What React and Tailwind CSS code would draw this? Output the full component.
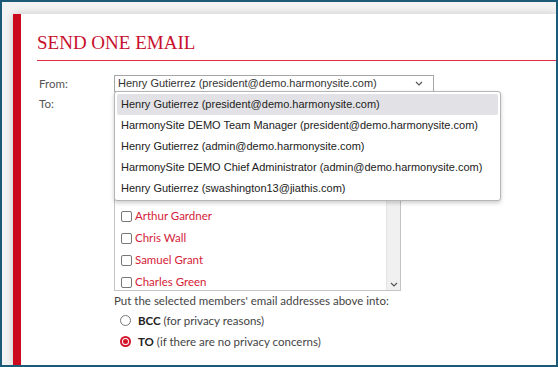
import React from "react";

// first rows sit under the open sender dropdown, so they are left blank
const members = ["", "", "", "", "", "Arthur Gardner", "Chris Wall", "Samuel Grant", "Charles Green"];

const senders = [
  "Henry Gutierrez (president@demo.harmonysite.com)",
  "HarmonySite DEMO Team Manager (president@demo.harmonysite.com)",
  "Henry Gutierrez (admin@demo.harmonysite.com)",
  "HarmonySite DEMO Chief Administrator (admin@demo.harmonysite.com)",
  "Henry Gutierrez (swashington13@jiathis.com)",
];

function Chevron({ className }) {
  return (
    <svg width="8" height="5" viewBox="0 0 8 5" className={className}>
      <path d="M1 1 L4 4 L7 1" fill="none" stroke="#555" strokeWidth="1.2" />
    </svg>
  );
}

export default function App() {
  const sans = { fontFamily: "Lato, 'Open Sans', sans-serif" };
  return (
    <div className="w-[558px] h-[367px] border-2 border-[#1b5b78] bg-[#f3f3f3] overflow-hidden pt-[12px] pl-[11px]">
      <div
        className="h-full bg-white border-l-[8px] border-[#cc0a1e] shadow-[0_0_8px_rgba(0,0,0,0.18)] pl-[16px] pt-[18px]"
        style={sans}
      >
        <h1 className="text-[19px] leading-[22px] text-[#c8102e] pb-[6px] border-b border-[#e2304a]" style={{ fontFamily: "'Liberation Serif', serif" }}>
          SEND ONE EMAIL
        </h1>

        <div className="relative mt-[14px] text-[11.5px] text-[#555]">
          <div className="flex items-center h-[17px]">
            <span className="w-[77px] pl-[2px]">From:</span>
            <div className="w-[320px] h-[17px] border border-[#a6a6a6] flex items-center justify-between pl-[3px] pr-[10px] text-[#333] text-[11px] whitespace-nowrap" style={{ fontFamily: "'Liberation Sans', Arial, sans-serif" }}>
              <span>Henry Gutierrez (president@demo.harmonysite.com)</span>
              <Chevron />
            </div>
          </div>

          <div className="flex mt-[2px]">
            <span className="w-[77px] pl-[2px] leading-[20px]">To:</span>
            <div className="w-[287px] h-[197px] border border-[#c4c4c4] flex overflow-hidden">
              <div className="flex-1">
                {members.map((m, i) => (
                  <div key={i} className="h-[22px] flex items-center pl-[6px] gap-[3px]">
                    {m && <span className="w-[11px] h-[11px] border border-[#777] rounded-[2px] bg-white" />}
                    <span className="text-[#d42238] text-[11.5px]">{m}</span>
                  </div>
                ))}
              </div>
              <div className="w-[14px] bg-[#f0f0f0] border-l border-[#e4e4e4] flex flex-col justify-end items-center pb-[3px]">
                <Chevron />
              </div>
            </div>
          </div>

          <div className="ml-[77px] leading-[19px] text-[#444] whitespace-nowrap">
            Put the selected members' email addresses above into:
          </div>
          <div className="ml-[83px] text-[#444]">
            <div className="h-[21px] flex items-center gap-[7px]">
              <span className="w-[11px] h-[11px] rounded-full border border-[#777]" />
              <span>
                <b className="text-[#222]">BCC</b> (for privacy reasons)
              </span>
            </div>
            <div className="h-[21px] flex items-center gap-[7px]">
              <span className="w-[11px] h-[11px] rounded-full border-2 border-[#d4152b] flex items-center justify-center">
                <span className="w-[5px] h-[5px] rounded-full bg-[#d4152b]" />
              </span>
              <span>
                <b className="text-[#222]">TO</b> (if there are no privacy concerns)
              </span>
            </div>
          </div>

          <div
            className="absolute left-[77px] top-[16px] w-[387px] h-[110px] bg-white border border-[#b5b5b5] rounded-[3px] shadow-[0_2px_4px_rgba(0,0,0,0.2)] p-[2px] text-[#222] text-[11px] whitespace-nowrap"
            style={{ fontFamily: "'Liberation Sans', Arial, sans-serif" }}
          >
            {senders.map((s, i) => (
              <div key={s} className={`h-[21px] flex items-center pl-[4px] rounded-[2px] ${i === 0 ? "bg-[#e2e2e6]" : ""}`}>
                {s}
              </div>
            ))}
          </div>
        </div>
      </div>
    </div>
  );
}
